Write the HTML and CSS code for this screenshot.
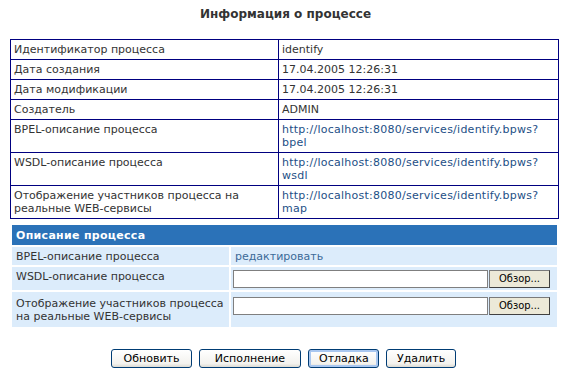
FILE: index.html
```html
<!DOCTYPE html>
<html lang="ru">
<head>
    <meta charset="UTF-8">
    <title>Информация о процессе</title>
    <link rel="stylesheet" href="styles.css">
</head>
<body>
<h1 class="title">Информация о процессе</h1>

<table class="info">
    <tr><td class="name">Идентификатор процесса</td><td>identify</td></tr>
    <tr><td class="name">Дата создания</td><td>17.04.2005 12:26:31</td></tr>
    <tr><td class="name">Дата модификации</td><td>17.04.2005 12:26:31</td></tr>
    <tr><td class="name">Создатель</td><td>ADMIN</td></tr>
    <tr><td class="name">BPEL-описание процесса</td><td><a href="#">http://localhost:8080/services/identify.bpws?<br>bpel</a></td></tr>
    <tr><td class="name">WSDL-описание процесса</td><td><a href="#">http://localhost:8080/services/identify.bpws?<br>wsdl</a></td></tr>
    <tr><td class="name">Отображение участников процесса на реальные WEB-сервисы</td><td><a href="#">http://localhost:8080/services/identify.bpws?<br>map</a></td></tr>
</table>

<table class="desc">
    <tr><th colspan="2">Описание процесса</th></tr>
    <tr class="r1"><td class="name">BPEL-описание процесса</td><td><a class="edit" href="#">редактировать</a></td></tr>
    <tr class="r2"><td class="name">WSDL-описание процесса</td><td><span class="file"><span class="field"></span><span class="browse">Обзор...</span></span></td></tr>
    <tr class="r3"><td class="name">Отображение участников процесса на реальные WEB-сервисы</td><td><span class="file"><span class="field"></span><span class="browse">Обзор...</span></span></td></tr>
</table>

<div class="actions">
    <button class="btn">Обновить</button>
    <button class="btn">Исполнение</button>
    <button class="btn cur">Отладка</button>
    <button class="btn">Удалить</button>
</div>
</body>
</html>
```

FILE: styles.css
```css
*{
    margin: 0;
    padding: 0;
}
body{
    background: #fff;
    font-family: "DejaVu Sans", Verdana, sans-serif;
    font-size: 11px;
    color: #333;
}
a{
    color: #1d4f86;
    text-decoration: none;
}
.info a{
    letter-spacing: 0.25px;
}
.title{
    font-size: 12px;
    font-weight: bold;
    text-align: center;
    color: #333;
    padding-top: 7px;
    height: 39px;
    box-sizing: border-box;
    padding-left: 4px;
}
.info{
    margin-left: 10px;
    width: 549px;
    border-collapse: collapse;
    border: 1px solid #000080;
}
.info td{
    border: 1px solid #000080;
    padding: 3px 3px 3px 3px;
    line-height: 13px;
    vertical-align: top;
}
.info td.name{
    width: 254px;
    padding-right: 10px;
}
.desc{
    margin: 4px 0 0 10px;
    width: 549px;
    border-spacing: 2px;
}
.desc th{
    background: #2b72b8;
    color: #fff;
    text-align: left;
    font-size: 11px;
    font-weight: bold;
    height: 20px;
    padding: 0 4px;
    letter-spacing: 0.3px;
}
.desc td{
    background: #dcecfb;
    vertical-align: top;
    line-height: 13px;
    padding: 3px 4px 2px 4px;
}
.desc td.name{
    width: 209px;
}
.desc .r1 td{
    height: 13px;
}
.desc .r2 td{
    height: 18px;
}
.desc .r3 td{
    height: 28px;
}
.desc .r3 td.name{
    padding-top: 5px;
}
.edit{
    color: #3b6a98;
}
.file{
    display: flex;
    gap: 1px;
    margin-left: -2px;
}
.r3 .file{
    margin-top: 2px;
}
.field{
    width: 255px;
    height: 18px;
    box-sizing: border-box;
    background: #fff;
    border: 1px solid #7f7f7f;
}
.browse{
    width: 61px;
    height: 18px;
    box-sizing: border-box;
    background: #ece9d8;
    border: 1px solid #7a7a7a;
    border-right-color: #404040;
    border-bottom-color: #404040;
    font-family: "DejaVu Sans Condensed", Tahoma, sans-serif;
    font-size: 11px;
    line-height: 16px;
    text-align: center;
    color: #000;
}
.actions{
    display: flex;
    justify-content: center;
    gap: 7px;
    margin-top: 20px;
    padding-left: 0;
}
.btn{
    height: 19px;
    padding: 0 10px;
    border: 1px solid #003c74;
    border-radius: 3px;
    background: linear-gradient(#fff, #f3f2ee 80%, #dcdad2);
    font-family: "DejaVu Sans", Verdana, sans-serif;
    font-size: 11px;
    color: #000;
}
.btn:nth-child(1){ width: 81px; }
.btn:nth-child(2){ width: 102px; }
.btn:nth-child(3){ width: 71px; }
.btn:nth-child(4){ width: 70px; }
.btn.cur{
    box-shadow: inset 0 0 0 2px #a9c7f0;
}
```
